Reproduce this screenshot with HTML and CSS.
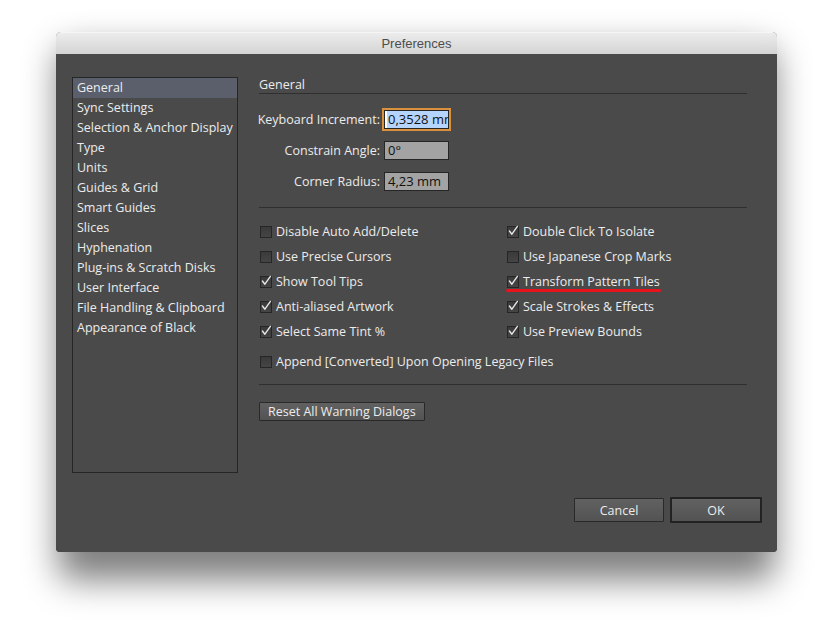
FILE: index.html
```html
<!DOCTYPE html>
<html lang="en">
<head>
    <meta charset="UTF-8">
    <title>Preferences</title>
    <link rel="stylesheet" href="styles.css">
</head>
<body>
    <div class="window">
        <div class="titlebar">Preferences</div>
        <div class="dialog">
            <div class="main">
                <ul class="sidebar">
                    <li class="selected">General</li>
                    <li>Sync Settings</li>
                    <li>Selection &amp; Anchor Display</li>
                    <li>Type</li>
                    <li>Units</li>
                    <li>Guides &amp; Grid</li>
                    <li>Smart Guides</li>
                    <li>Slices</li>
                    <li>Hyphenation</li>
                    <li>Plug-ins &amp; Scratch Disks</li>
                    <li>User Interface</li>
                    <li>File Handling &amp; Clipboard</li>
                    <li>Appearance of Black</li>
                </ul>

                <section class="panel">
                    <h2 class="panel-title">General</h2>

                    <div class="fields">
                        <label>Keyboard Increment:</label>
                        <div class="field focused"><span class="sel">0,3528 mm</span></div>
                        <label>Constrain Angle:</label>
                        <div class="field">0°</div>
                        <label>Corner Radius:</label>
                        <div class="field">4,23 mm</div>
                    </div>

                    <div class="options">
                        <div class="check"><span class="box"></span>Disable Auto Add/Delete</div>
                        <div class="check"><span class="box on"></span>Double Click To Isolate</div>
                        <div class="check"><span class="box"></span>Use Precise Cursors</div>
                        <div class="check"><span class="box"></span>Use Japanese Crop Marks</div>
                        <div class="check"><span class="box on"></span>Show Tool Tips</div>
                        <div class="check marked"><span class="box on"></span>Transform Pattern Tiles</div>
                        <div class="check"><span class="box on"></span>Anti-aliased Artwork</div>
                        <div class="check"><span class="box on"></span>Scale Strokes &amp; Effects</div>
                        <div class="check"><span class="box on"></span>Select Same Tint %</div>
                        <div class="check"><span class="box on"></span>Use Preview Bounds</div>
                    </div>
                    <div class="check single"><span class="box"></span>Append [Converted] Upon Opening Legacy Files</div>

                    <div class="reset-row">
                        <button class="btn">Reset All Warning Dialogs</button>
                    </div>
                </section>
            </div>

            <div class="footer">
                <button class="btn cancel">Cancel</button>
                <button class="btn ok">OK</button>
            </div>
        </div>
    </div>

    <script>
        document.querySelectorAll(".box.on").forEach(function (box) {
            box.innerHTML = '<svg width="12" height="12" viewBox="0 0 12 12"><path d="M2.4 6 L4.9 9.2 L10.4 1.4" fill="none" stroke="#e6e6e6" stroke-width="1.4" stroke-linecap="round" stroke-linejoin="round"/></svg>';
        });
    </script>
</body>
</html>
```

FILE: styles.css
```css
html, body {
    height: 100%;
}

body {
    margin: 0;
    padding: 32px 0 0 56px;
    box-sizing: border-box;
    background-color: #fff;
    font-family: "Open Sans", "Liberation Sans", sans-serif;
}

.window {
    position: relative;
    z-index: 0;
    width: 721px;
    height: 520px;
    border-radius: 5px 5px 4px 4px;
    background-color: #4a4a4a;
}

/* soft window shadow */
.window::before {
    content: "";
    position: absolute;
    z-index: -1;
    left: 2px;
    right: 2px;
    top: 16px;
    bottom: -28px;
    border-radius: 14px;
    background-color: rgba(0, 0, 0, 0.5);
    filter: blur(17px);
}

.titlebar {
    height: 22px;
    line-height: 21px;
    text-align: center;
    font-family: "Liberation Sans", sans-serif;
    font-size: 13px;
    color: #4d4d4d;
    background: linear-gradient(#ececec, #d4d4d4);
    border-top: 1px solid #f6f6f6;
    border-radius: 5px 5px 0 0;
    box-sizing: border-box;
}

.dialog {
    height: 498px;
    padding: 23px 15px 0 16px;
    box-sizing: border-box;
    border-radius: 0 0 4px 4px;
    background-color: #4a4a4a;
    color: #ececec;
    font-size: 12.5px;
}

.main {
    display: flex;
    height: 396px;
}

.sidebar {
    width: 166px;
    height: 396px;
    margin: 0;
    padding: 0;
    list-style: none;
    border: 1px solid #262626;
    box-sizing: border-box;
}

.sidebar li {
    height: 20px;
    line-height: 20px;
    padding-left: 4px;
    white-space: nowrap;
}

.sidebar li.selected {
    background-color: #5b5f6c;
}

.panel {
    width: 488px;
    margin-left: 21px;
}

.panel-title {
    margin: 0;
    height: 16px;
    line-height: 16px;
    font-size: 12.5px;
    font-weight: normal;
    border-bottom: 1px solid #2f2f2f;
}

.fields {
    display: grid;
    grid-template-columns: 121px 65px;
    grid-auto-rows: 31px;
    column-gap: 4px;
    align-items: center;
    margin-top: 10px;
    padding-bottom: 10px;
    border-bottom: 1px solid #2f2f2f;
}

.fields label {
    justify-self: end;
    white-space: nowrap;
}

.field {
    height: 19px;
    line-height: 17px;
    padding: 0 3px;
    box-sizing: border-box;
    border: 1px solid #262626;
    background-color: #a3a3a3;
    color: #111;
    font-size: 13px;
    overflow: hidden;
    white-space: nowrap;
}

.field.focused {
    background-color: #fff;
    outline: 2px solid #d9913d;
    padding-left: 2px;
}

.sel {
    background-color: #b5d5ff;
    padding: 1px 0 1px 1px;
}

.options {
    display: grid;
    grid-template-columns: 247px 241px;
    grid-auto-rows: 25px;
    margin-top: 11px;
}

.check {
    display: flex;
    align-items: center;
    height: 25px;
    padding-left: 1px;
    white-space: nowrap;
}

.check.single {
    margin-top: 5px;
    padding-bottom: 10px;
    border-bottom: 1px solid #2f2f2f;
}

.check.marked {
    position: relative;
}

.check.marked::after {
    content: "";
    position: absolute;
    left: 0;
    top: 20px;
    width: 155px;
    height: 3px;
    border-radius: 2px;
    background-color: #e8131b;
}

.box {
    width: 12px;
    height: 12px;
    margin-right: 4px;
    box-sizing: border-box;
    border: 1px solid #262626;
    background: linear-gradient(#3a3a3a, #454545);
    flex-shrink: 0;
    position: relative;
}

.box svg {
    position: absolute;
    left: -1px;
    top: -2px;
    overflow: visible;
}

.reset-row {
    margin-top: 17px;
}

.btn {
    height: 19px;
    padding: 0 8px;
    font-family: "Open Sans", "Liberation Sans", sans-serif;
    font-size: 12.5px;
    color: #ececec;
    background: linear-gradient(#616161, #535353);
    border: 1px solid #292929;
    border-radius: 1px;
}

.footer {
    display: flex;
    justify-content: flex-end;
    align-items: center;
    gap: 6px;
    margin-top: 24px;
}

.cancel {
    width: 90px;
    height: 24px;
}

.ok {
    width: 92px;
    height: 26px;
    border: 2px solid #222;
}
```
